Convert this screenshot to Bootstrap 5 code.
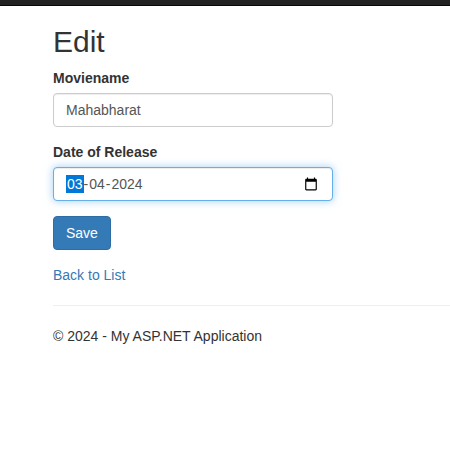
<!DOCTYPE html>
<html lang="en">
<head>
<meta charset="utf-8">
<meta name="viewport" content="width=device-width, initial-scale=1">
<title>Edit - My ASP.NET Application</title>
<link href="https://cdn.jsdelivr.net/npm/bootstrap@5.3.0/dist/css/bootstrap.min.css" rel="stylesheet">
<style>
body{font-family:"Liberation Sans",Arial,sans-serif;font-size:14px;line-height:20px;color:#333;background:#fff;overflow:hidden}
.topbar{height:6px;min-height:0;background:#222;border-bottom:1px solid #080808}
.page{padding:19px 0 0 53px}
h2{font-size:30px;line-height:33px;margin-bottom:10px}
.form-label{margin-bottom:5px}
.group{margin-bottom:15px}
.form-control{width:280px;height:34px;padding:6px 12px;font-size:14px;line-height:20px;color:#555;border:1px solid #ccc;border-radius:4px;box-shadow:inset 0 1px 1px rgba(0,0,0,.075)}
.form-control:focus{color:#555}
.date-box{border-color:#66afe9;box-shadow:inset 0 1px 1px rgba(0,0,0,.075),0 0 8px rgba(102,175,233,.6)}
.seg{padding:0 1px;line-height:18px}
.seg-active{background:#0078d7;color:#fff}
.cal{width:14px;height:14px;margin-right:2px}
.btn-primary{--bs-btn-bg:#337ab7;--bs-btn-border-color:#2e6da4;font-size:14px;line-height:20px;padding:6px 12px;border-radius:4px}
a{color:#337ab7}
hr{margin:20px 0;border-top:1px solid #eee;opacity:1}
</style>
<script src="https://cdn.jsdelivr.net/npm/bootstrap@5.3.0/dist/js/bootstrap.bundle.min.js"></script>
</head>
<body>
<nav class="navbar p-0 topbar"></nav>
<main class="page">
  <h2 class="mt-0 fw-normal">Edit</h2>
  <form>
    <div class="group">
      <label class="form-label d-block fw-bold" for="movie">Moviename</label>
      <input class="form-control" id="movie" type="text" value="Mahabharat">
    </div>
    <div class="group">
      <label class="form-label d-block fw-bold">Date of Release</label>
      <div class="form-control date-box d-flex align-items-center">
        <span class="seg seg-active">03</span><span>-</span><span class="seg">04</span><span>-</span><span class="seg">2024</span>
        <svg class="cal ms-auto" viewBox="0 0 24 24" fill="#000" aria-hidden="true"><path d="M20 3h-1V1h-2v2H7V1H5v2H4c-1.100 0-2 .9-2 2v16c0 1.100.9 2 2 2h16c1.100 0 2-.9 2-2V5c0-1.100-.9-2-2-2zm0 18H4V8h16v13z"/></svg>
      </div>
    </div>
    <div class="group"><button class="btn btn-primary d-block" type="button">Save</button></div>
  </form>
  <div><a class="text-decoration-none" href="#">Back to List</a></div>
  <hr>
  <footer><p class="mb-0">© 2024 - My ASP.NET Application</p></footer>
</main>
</body>
</html>
